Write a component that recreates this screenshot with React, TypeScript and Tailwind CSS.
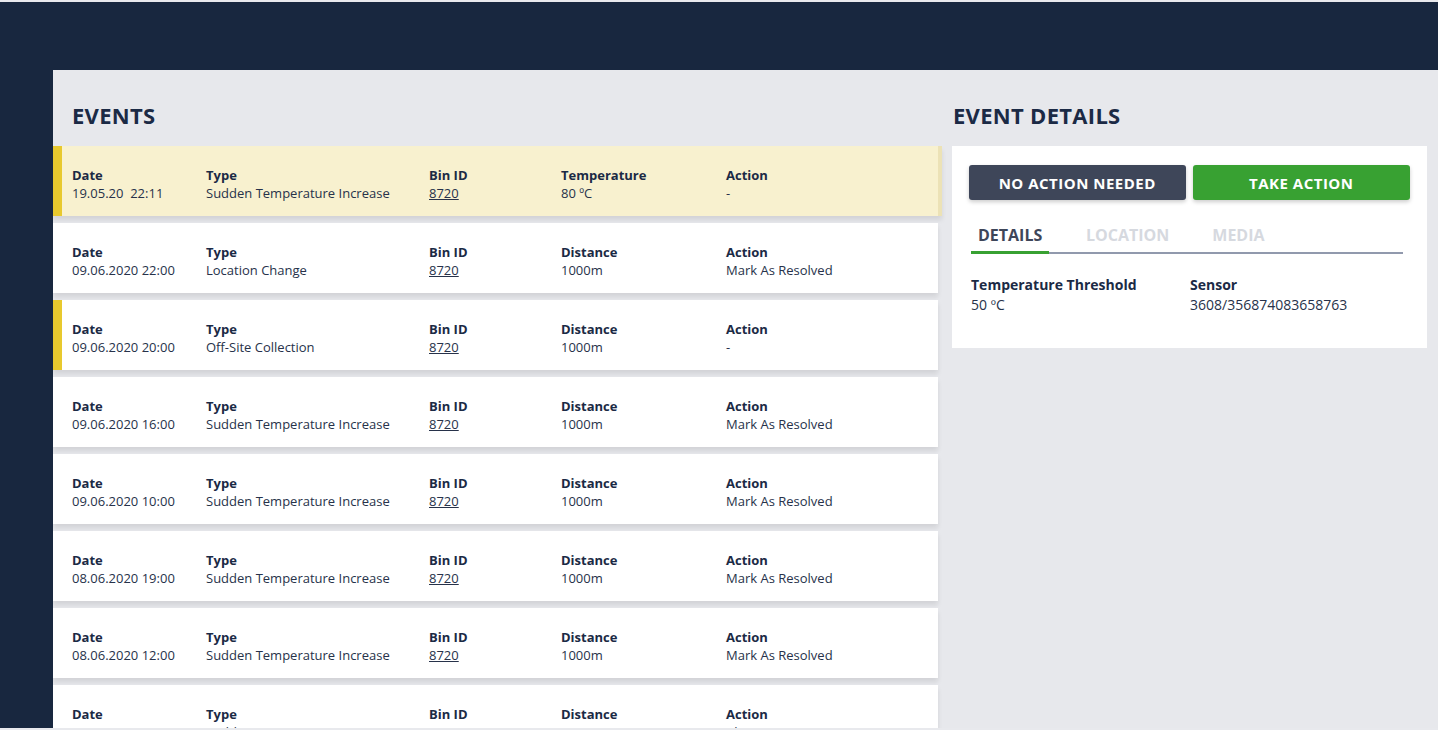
import React from "react";

interface EventRow {
  date: string;
  type: string;
  binId: string;
  metricLabel: string;
  metricValue: string;
  action: string;
  flagged?: boolean;
  selected?: boolean;
}

const events: EventRow[] = [
  { date: "19.05.20  22:11", type: "Sudden Temperature Increase", binId: "8720", metricLabel: "Temperature", metricValue: "80 ºC", action: "-", flagged: true, selected: true },
  { date: "09.06.2020 22:00", type: "Location Change", binId: "8720", metricLabel: "Distance", metricValue: "1000m", action: "Mark As Resolved" },
  { date: "09.06.2020 20:00", type: "Off-Site Collection", binId: "8720", metricLabel: "Distance", metricValue: "1000m", action: "-", flagged: true },
  { date: "09.06.2020 16:00", type: "Sudden Temperature Increase", binId: "8720", metricLabel: "Distance", metricValue: "1000m", action: "Mark As Resolved" },
  { date: "09.06.2020 10:00", type: "Sudden Temperature Increase", binId: "8720", metricLabel: "Distance", metricValue: "1000m", action: "Mark As Resolved" },
  { date: "08.06.2020 19:00", type: "Sudden Temperature Increase", binId: "8720", metricLabel: "Distance", metricValue: "1000m", action: "Mark As Resolved" },
  { date: "08.06.2020 12:00", type: "Sudden Temperature Increase", binId: "8720", metricLabel: "Distance", metricValue: "1000m", action: "Mark As Resolved" },
  { date: "18.05.20  09:11", type: "Sudden Temperature Increase", binId: "8720", metricLabel: "Distance", metricValue: "1000m", action: "Change Location" },
];

const Cell: React.FC<{ label: string; width: string; children: React.ReactNode }> = ({ label, width, children }) => (
  <div className={`${width} shrink-0`}>
    <p className="text-[13px] leading-[18px] font-bold text-[#1b2a45]">{label}</p>
    <p className="text-[13px] leading-[18px] text-[#27324a] whitespace-pre">{children}</p>
  </div>
);

const EventItem: React.FC<{ event: EventRow }> = ({ event }) => (
  <div
    className={`flex h-[70px] shrink-0 pt-[20px] shadow-[0_4px_5px_rgba(0,0,0,0.09)] ${
      event.selected ? "bg-[#f8f1cf] w-[889px] border-r-[4px] border-[#ece2b6]" : "bg-white w-[885px]"
    }`}
  >
    <div className={`w-[9px] shrink-0 -mt-[20px] h-[70px] ${event.flagged ? "bg-[#e8c92e]" : ""}`} />
    <div className="flex pl-[10px]">
      <Cell label="Date" width="w-[134px]">{event.date}</Cell>
      <Cell label="Type" width="w-[223px]">{event.type}</Cell>
      <Cell label="Bin ID" width="w-[132px]">
        <span className="underline">{event.binId}</span>
      </Cell>
      <Cell label={event.metricLabel} width="w-[165px]">{event.metricValue}</Cell>
      <Cell label="Action" width="w-[180px]">{event.action}</Cell>
    </div>
  </div>
);

const EventDetails: React.FC = () => (
  <div className="bg-white h-[202px] px-[17px] pt-[19px]">
    <div className="flex gap-[7px]">
      <button className="w-[217px] h-[35px] pt-[1px] rounded-[3px] bg-[#3e4659] text-white text-[15px] font-bold tracking-[0.5px] shadow-[0_2px_4px_rgba(0,0,0,0.2)]">
        NO ACTION NEEDED
      </button>
      <button className="w-[218px] h-[35px] pt-[1px] rounded-[3px] bg-[#38a132] text-white text-[15px] font-bold tracking-[0.5px] shadow-[0_2px_4px_rgba(0,0,0,0.2)]">
        TAKE ACTION
      </button>
    </div>
    <div className="mt-[23px] w-[432px] ml-[2px] flex items-end border-b-2 border-[#9199ad]">
      <div className="w-[78px] pl-[7px] pb-[4px] border-b-[3px] border-[#38a132] -mb-[2px] text-[16px] font-bold text-[#3e4659]">
        DETAILS
      </div>
      <div className="pl-[37px] pb-[5px] text-[16px] font-bold text-[#d6d9df]">LOCATION</div>
      <div className="pl-[43px] pb-[5px] text-[16px] font-bold text-[#d6d9df]">MEDIA</div>
    </div>
    <div className="flex mt-[21px] ml-[2px]">
      <div className="w-[219px]">
        <p className="text-[14px] leading-[20px] font-bold text-[#1b2a45]">Temperature Threshold</p>
        <p className="text-[14px] leading-[20px] text-[#27324a]">50 ºC</p>
      </div>
      <div>
        <p className="text-[14px] leading-[20px] font-bold text-[#1b2a45]">Sensor</p>
        <p className="text-[14px] leading-[20px] text-[#27324a]">3608/356874083658763</p>
      </div>
    </div>
  </div>
);

const App: React.FC = () => {
  return (
    <div
      className="h-[730px] w-full overflow-hidden flex flex-col bg-[#18273f] border-t-2 border-b-2 border-[#e8e9ed]"
      style={{ fontFamily: '"Open Sans", "Noto Sans", sans-serif' }}
    >
      <div className="h-[68px] shrink-0" />
      <div className="flex flex-1 min-h-0">
        <div className="w-[53px] shrink-0" />
        <div className="flex-1 bg-[#e7e8ec] flex gap-[14px] overflow-hidden">
          <div className="w-[885px] shrink-0 flex flex-col">
            <h2 className="shrink-0 pl-[19px] pt-[30px] h-[76px] text-[22px] leading-[30px] font-bold text-[#1b2a45] tracking-[0.3px]">
              EVENTS
            </h2>
            <div className="flex flex-col gap-[7px]">
              {events.map((event, index) => (
                <EventItem key={index} event={event} />
              ))}
            </div>
          </div>
          <div className="w-[475px] shrink-0 flex flex-col">
            <h2 className="shrink-0 pl-[1px] pt-[30px] h-[76px] text-[22px] leading-[30px] font-bold text-[#1b2a45] tracking-[0.3px]">
              EVENT DETAILS
            </h2>
            <EventDetails />
          </div>
        </div>
      </div>
    </div>
  );
};

export default App;
